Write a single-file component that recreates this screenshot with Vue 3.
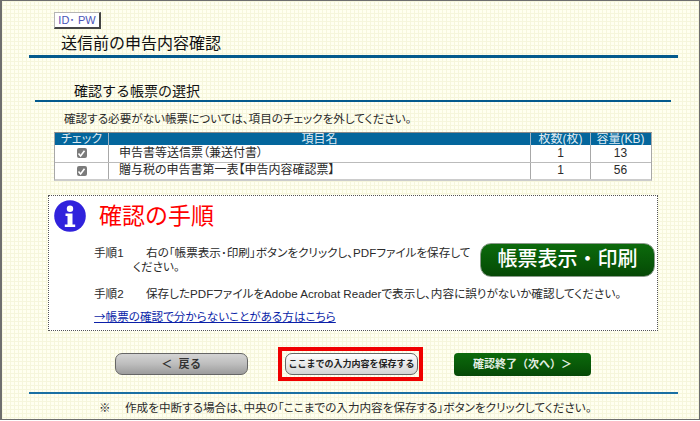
<script setup>
const rows = [
  { name: '申告書等送信票（兼送付書）', count: 1, size: 13 },
  { name: '贈与税の申告書第一表【申告内容確認票】', count: 1, size: 56 }
]
</script>

<template>
  <div class="page">
    <div class="id-wrap"><span class="id-btn">ID･ PW</span></div>
    <h1 class="title">送信前の申告内容確認</h1>
    <h2 class="sub">確認する帳票の選択</h2>
    <p class="lead">確認する必要がない帳票については、項目のチェックを外してください。</p>
    <div class="tbl">
      <div class="row head">
        <div class="c1">チェック</div>
        <div class="c2">項目名</div>
        <div class="c3">枚数(枚)</div>
        <div class="c4">容量(KB)</div>
      </div>
      <div v-for="r in rows" :key="r.name" class="row body">
        <div class="c1"><span class="check"><svg width="9" height="9" viewBox="0 0 9 9"><path d="M1.5 4.5 L3.6 7 L7.5 1.8" fill="none" stroke="#fff" stroke-width="1.6"/></svg></span></div>
        <div class="c2 name">{{ r.name }}</div>
        <div class="c3">{{ r.count }}</div>
        <div class="c4">{{ r.size }}</div>
      </div>
    </div>
    <section class="box">
      <div class="box-head">
        <svg class="info" width="32" height="32" viewBox="0 0 32 32">
          <circle cx="16" cy="16" r="15.8" fill="#3022dc"/>
          <circle cx="16" cy="8.7" r="3.2" fill="#fff"/>
          <path d="M11.5 13.5h7v11h2.7v2.6H10.8v-2.6h2.7v-8.4h-2z" fill="#fff"/>
        </svg>
        <span class="box-title">確認の手順</span>
      </div>
      <div class="step-row">
        <div class="step-text">
          <div class="step"><span class="lbl">手順1</span><span>右の「帳票表示･印刷」ボタンをクリックし、PDFファイルを保存して</span></div>
          <div class="cont">ください。</div>
        </div>
        <div class="print">帳票表示・印刷</div>
      </div>
      <div class="step two"><span class="lbl">手順2</span><span>保存したPDFファイルをAdobe Acrobat Readerで表示し、内容に誤りがないか確認してください。</span></div>
      <a class="help">→帳票の確認で分からないことがある方はこちら</a>
    </section>
    <div class="actions">
      <div class="btn gray">＜ 戻る</div>
      <div class="hl"><div class="btn save">ここまでの入力内容を保存する</div></div>
      <div class="btn green">確認終了（次へ）＞</div>
    </div>
    <div class="foot"><span class="mark">※</span>作成を中断する場合は、中央の「ここまでの入力内容を保存する」ボタンをクリックしてください。</div>
  </div>
</template>

<style scoped>
.page {
  box-sizing: border-box;
  width: 700px;
  height: 420px;
  overflow: hidden;
  border: 1px solid #6e6e6e;
  border-left-width: 2px;
  padding: 11px 0 0 27px;
  background-color: #fffff0;
  background-image:
    linear-gradient(#f6f6dc 1px, transparent 1px),
    linear-gradient(90deg, #f6f6dc 1px, transparent 1px);
  background-size: 4px 4px;
  font-family: "Liberation Sans", "Noto Sans CJK JP", sans-serif;
  font-size: 11.6px;
  font-feature-settings: "palt";
  color: #2a2a2a;
}
.id-wrap { padding-left: 25px; height: 17px; }
.id-btn {
  display: block; box-sizing: border-box;
  width: 47px; height: 17px; background: #fff;
  border: 1px solid #b5b5b5; border-right: 2px solid #444; border-bottom: 2px solid #444;
  color: #4a55b8; font-size: 11px; line-height: 14px; text-align: center;
}
.title {
  margin: 0; width: 649px; box-sizing: border-box; height: 29px;
  padding: 5px 0 0 32px;
  font-size: 16px; font-weight: 400; line-height: 20px; color: #111;
  font-feature-settings: normal;
  border-bottom: 3px solid #045a8d;
}
.sub {
  margin: 24px 0 0 6px; width: 636px; box-sizing: border-box; height: 20px;
  padding: 0 0 0 39px;
  font-size: 14px; font-weight: 400; line-height: 18px; color: #111;
  font-feature-settings: normal;
  border-bottom: 2px solid #045a8d;
}
.lead { margin: 8px 0 0 35px; line-height: 17px; }
.tbl { margin: 5px 0 0 25px; width: 598px; border: 1px solid #a8a8a8; border-top-color: #888; border-bottom: 2px solid #ccc; box-sizing: border-box; font-size: 12px; }
.row { display: grid; grid-template-columns: 53px 422px 60px 60px; text-align: center; }
.row > div { box-sizing: border-box; }
.head { background: #04669c; color: #dfeaf2; height: 12px; line-height: 12px; }
.head > div { border-left: 1px solid #9fb4c4; overflow: hidden; white-space: nowrap; }
.head > div:first-child { border-left: 0; }
.body { background: #fff; height: 17px; line-height: 16px; }
.body + .body { height: 16px; line-height: 15px; border-top: 1px solid #bbb; }
.body > div { border-left: 1px solid #a8a8a8; }
.body > div:first-child { border-left: 0; }
.row .name { text-align: left; padding-left: 10px; }
.check { display: inline-flex; width: 10px; height: 10px; margin-top: 3px; background: #7b7b7b; border-radius: 2px; align-items: center; justify-content: center; vertical-align: top; }
.box {
  margin: 14px 0 0 19px; width: 610px; height: 136px; box-sizing: border-box;
  background: #fff; border: 1px dotted #555; padding: 4px 0 0 5px;
}
.box-head { display: flex; align-items: center; gap: 13px; height: 32px; }
.info { flex: none; }
.box-title { color: #ff0000; font-size: 23px; line-height: 32px; font-feature-settings: normal; }
.step-row { display: flex; margin-top: 11px; height: 34px; padding-left: 40px; }
.step-text { padding-top: 3px; width: 386px; flex: none; white-space: nowrap; }
.step { display: flex; line-height: 14px; white-space: nowrap; }
.lbl { width: 52px; flex: none; }
.cont { padding-left: 39px; line-height: 14px; }
.print {
  flex: none; width: 175px; height: 34px;
  box-sizing: border-box; border-radius: 11px; border: 1px solid #8a9a8a;
  background: linear-gradient(#0c6a0c, #075407 70%, #064806);
  color: #fff; font-size: 20px; font-weight: 500; line-height: 31px; text-align: center;
  font-feature-settings: normal;
}
.two { margin-left: 40px; margin-top: 10px; }
.help { display: block; margin: 8px 0 0 40px; color: #0b1fa8; text-decoration: underline; line-height: 14px; font-family: "Noto Sans CJK JP", sans-serif; }
.actions { display: flex; align-items: center; margin: 16px 0 0 86px; height: 34px; font-feature-settings: normal; }
.btn { box-sizing: border-box; text-align: center; font-weight: 700; white-space: nowrap; }
.gray { width: 133px; height: 22px; border: 1px solid #666; border-radius: 7px; line-height: 20px; background: linear-gradient(#d4d4d4, #bdbdbd 50%, #9c9c9c); color: #333; font-size: 11px; letter-spacing: 0.6px; word-spacing: 2px; }
.hl { box-sizing: border-box; width: 145px; height: 34px; margin-left: 30px; border: 4px solid #f00000; padding: 2px 1px 2px 3px; }
.save { width: 133px; height: 22px; border: 1px solid #666; border-radius: 7px; line-height: 20px; font-size: 9px; color: #222; background: linear-gradient(#fff, #d4d4d4); }
.green { width: 137px; height: 23px; margin: 1px 0 0 31px; border-radius: 4px; line-height: 22px; background: linear-gradient(#0c6a0c, #075407 70%, #064806); color: #e4efe4; font-size: 11px; }
.foot { margin: 11px 0 0 0; width: 649px; box-sizing: border-box; border-top: 2px solid #1a6fa3; padding: 6px 0 0 70px; line-height: 15px; display: flex; white-space: nowrap; }
.mark { width: 26px; flex: none; }
</style>
